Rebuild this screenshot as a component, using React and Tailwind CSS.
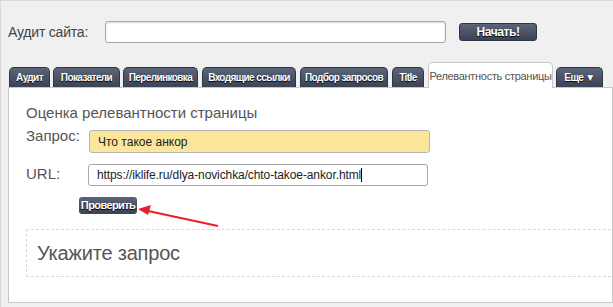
import React from 'react'

const tabs = [
  { label: 'Аудит', w: 'w-[41px]', gap: '' },
  { label: 'Показатели', w: 'w-[67px]', gap: 'ml-[3px]' },
  { label: 'Перелинковка', w: 'w-[75px]', gap: 'ml-[3px]' },
  { label: 'Входящие ссылки', w: 'w-[94px]', gap: 'ml-[4px]' },
  { label: 'Подбор запросов', w: 'w-[88px]', gap: 'ml-[4px]' },
  { label: 'Title', w: 'w-[32px]', gap: 'ml-[4px]' },
]

function DarkTab({ label, className = '' }) {
  return (
    <div
      className={`h-[20px] flex items-center justify-center overflow-hidden rounded-t-[5px] border border-b-0 border-[#2f3644] bg-gradient-to-b from-[#5b6579] to-[#3b4355] text-white text-[10px] font-bold tracking-[-0.6px] [text-shadow:0_1px_1px_#000] whitespace-nowrap ${className}`}
    >
      {label}
    </div>
  )
}

function App() {
  return (
    <div className="w-[613px] h-[307px] bg-[#eff0ef] border-t border-l border-[#d8d9d8] font-['Liberation_Sans',Arial,sans-serif] overflow-hidden relative">
      <div className="flex items-center h-[42px] pt-[20px] pl-[7px]">
        <span className="text-[14px] text-[#444] tracking-[-0.2px] w-[97px]">Аудит сайта:</span>
        <div className="w-[341px] h-[22px] bg-white border border-[#a8a8a8] rounded-[3px] shadow-[inset_0_1px_2px_rgba(0,0,0,0.15)]" />
        <button className="ml-[13px] w-[78px] h-[18px] rounded-[3px] border border-[#2f3644] bg-gradient-to-b from-[#5b6579] to-[#3b4355] text-white text-[12px] font-bold tracking-[-0.4px] [text-shadow:0_1px_1px_#000] leading-none">
          Начать!
        </button>
      </div>

      <div className="flex items-end pl-[8px] mt-[18px] h-[26px]">
        {tabs.map((t) => (
          <DarkTab key={t.label} label={t.label} className={`${t.w} ${t.gap}`} />
        ))}
        <div className="ml-[4px] w-[125px] h-[26px] flex justify-center pt-[5px] rounded-t-[5px] border border-b-0 border-[#c8c8c8] bg-white text-[11px] tracking-[-0.3px] text-[#555] whitespace-nowrap relative -mb-px z-10">
          Релевантность страницы
        </div>
        <DarkTab label="Еще ▼" className="ml-[3px] w-[47px]" />
      </div>

      <div className="ml-[7px] w-[605px] h-[216px] bg-white border border-[#c8c8c8] pt-[15px] pl-[17px]">
        <div className="text-[15px] text-[#555] leading-[20px]">Оценка релевантности страницы</div>
        <div className="flex items-start mt-[4px]">
          <span className="w-[63px] text-[15px] text-[#555] leading-[18px]">Запрос:</span>
          <div className="w-[341px] h-[23px] bg-[#fbe69b] border border-[#b5b5b5] rounded-[3px] flex items-center pl-[8px] text-[12px] text-[#222] mt-[3px]">
            Что такое анкор
          </div>
        </div>
        <div className="flex items-start mt-[11px]">
          <span className="w-[62px] text-[15px] text-[#555] leading-[18px] mt-[1px]">URL:</span>
          <div className="w-[340px] h-[22px] bg-white border border-[#a8a8a8] rounded-[3px] flex items-center pl-[8px] text-[12px] tracking-[-0.1px] text-[#222]">
            https://iklife.ru/dlya-novichka/chto-takoe-ankor.html<span className="w-px h-[14px] bg-black" />
          </div>
        </div>
        <button className="ml-[53px] mt-[11px] h-[17px] w-[58px] rounded-[3px] bg-gradient-to-b from-[#5b6579] to-[#3b4355] text-white text-[11px] font-bold tracking-[-0.6px] [text-shadow:0_1px_1px_#000] leading-none">
          Проверить
        </button>
        <div className="mt-[13px] w-[600px] h-[48px] border border-dashed border-[#d9d9d9] flex items-center pl-[10px] text-[20px] tracking-[-0.2px] text-[#555]">
          Укажите запрос
        </div>
      </div>

      <svg className="absolute left-0 top-0 pointer-events-none" width="613" height="307">
        <line x1="217" y1="225" x2="147" y2="210" stroke="#e8202a" strokeWidth="2.2" />
        <polygon points="137,208 150,204 147,214" fill="#e8202a" />
      </svg>
    </div>
  )
}

export default App
